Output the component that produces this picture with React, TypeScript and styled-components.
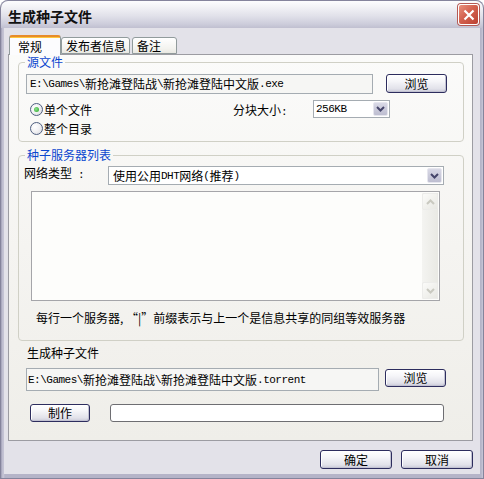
import styled, { createGlobalStyle } from "styled-components";

const GlobalStyle = createGlobalStyle`
  * { box-sizing: border-box; }
  body {
    margin: 0;
    background: #ffffff;
    font-family: "Noto Sans CJK SC", "Liberation Sans", sans-serif;
    font-size: 12px;
    color: #000;
  }
`;

const Chevron = ({ color }: { color: string }) => (
  <svg width="9" height="6" viewBox="0 0 9 6">
    <path d="M1 1 L4.5 4.5 L8 1" fill="none" stroke={color} strokeWidth="2" />
  </svg>
);

const ChevronUp = ({ color }: { color: string }) => (
  <svg width="9" height="6" viewBox="0 0 9 6">
    <path d="M1 5 L4.5 1.5 L8 5" fill="none" stroke={color} strokeWidth="2" />
  </svg>
);

const App = () => {
  return (
    <>
      <GlobalStyle />
      <Window>
        <TitleBar>
          <Title>生成种子文件</Title>
          <CloseButton>
            <svg width="12" height="12" viewBox="0 0 12 12">
              <path d="M1.5 1.5 L10.5 10.5 M10.5 1.5 L1.5 10.5" stroke="#fff" strokeWidth="2.2" />
            </svg>
          </CloseButton>
        </TitleBar>
        <Body>
          <Tabs>
            <Tab $active $w={52}>常规</Tab>
            <Tab $w={69}>发布者信息</Tab>
            <Tab $w={45} $gap={2}>备注</Tab>
          </Tabs>
          <Panel>
            <Group>
              <Legend>源文件</Legend>
              <GroupBody $pad="5px 0 3px 0">
                <FieldRow $indent={7}>
                  <TextBox $w={347} $h={20} $pad={3}>
                    <Latin>E:\Games\</Latin>新抢滩登陆战<Latin>\</Latin>新抢滩登陆中文版<Latin>.exe</Latin>
                  </TextBox>
                  <Button $w={61} $h={19} $ml={13}>浏览</Button>
                </FieldRow>
                <OptionsRow>
                  <RadioList>
                    <RadioItem>
                      <RadioDot $checked />
                      单个文件
                    </RadioItem>
                    <RadioItem>
                      <RadioDot />
                      整个目录
                    </RadioItem>
                  </RadioList>
                  <FieldLabel $w={80} $lh={19}>
                    分块大小<Latin>:</Latin>
                  </FieldLabel>
                  <Select $w={77} $h={18} $pad={2}>
                    <SelectValue>
                      <Latin>256KB</Latin>
                    </SelectValue>
                    <SelectArrow>
                      <Chevron color="#45456a" />
                    </SelectArrow>
                  </Select>
                </OptionsRow>
              </GroupBody>
            </Group>

            <Group $mt={6}>
              <Legend>种子服务器列表</Legend>
              <GroupBody $pad="4px 0 15px 0">
                <FieldRow $indent={5}>
                  <FieldLabel $w={84} $lh={14}>
                    网络类型<Latin> :</Latin>
                  </FieldLabel>
                  <Select $w={336} $h={19} $pad={4}>
                    <SelectValue>
                      使用公用<Latin>DHT</Latin>网络<Latin>(</Latin>推荐<Latin>)</Latin>
                    </SelectValue>
                    <SelectArrow>
                      <Chevron color="#45456a" />
                    </SelectArrow>
                  </Select>
                </FieldRow>
                <ListBox>
                  <ListArea />
                  <ScrollBar>
                    <ScrollButton>
                      <ChevronUp color="#c9c9c0" />
                    </ScrollButton>
                    <ScrollTrack />
                    <ScrollButton>
                      <Chevron color="#c9c9c0" />
                    </ScrollButton>
                  </ScrollBar>
                </ListBox>
                <Note>每行一个服务器, “|”前缀表示与上一个是信息共享的同组等效服务器</Note>
              </GroupBody>
            </Group>

            <OutputLabel>生成种子文件</OutputLabel>
            <FieldRow $indent={8} $mt={8}>
              <TextBox $w={353} $h={23} $pad={1}>
                <Latin>E:\Games\</Latin>新抢滩登陆战<Latin>\</Latin>新抢滩登陆中文版<Latin>.torrent</Latin>
              </TextBox>
              <Button $w={61} $h={18} $ml={6} $mt={1}>浏览</Button>
            </FieldRow>
            <FieldRow $indent={12} $mt={13}>
              <Button $w={60} $h={18}>制作</Button>
              <Progress />
            </FieldRow>
          </Panel>
          <Footer>
            <Button $w={72} $h={19}>确定</Button>
            <Button $w={72} $h={19}>取消</Button>
          </Footer>
        </Body>
      </Window>
    </>
  );
};

export default App;

const Window = styled.div`
  width: 484px;
  height: 479px;
  display: flex;
  flex-direction: column;
  background: linear-gradient(90deg, #9f9eb5 0, #c9c8d8 2px, #b5b4c8 4px, #b5b4c8 480px, #c9c8d8 482px, #8f8ea6 484px);
  border-radius: 8px 8px 0 0;
  border: 1px solid #85849c;
  border-top: none;
  overflow: hidden;
`;

const TitleBar = styled.div`
  height: 28px;
  flex: none;
  margin: 0 -1px;
  display: flex;
  align-items: center;
  justify-content: space-between;
  padding: 2px 4px 0 7px;
  border: 1px solid #85849c;
  border-bottom: none;
  border-radius: 8px 8px 0 0;
  background: linear-gradient(#fdfdfe 0%, #f1f1f5 25%, #e1e1ea 55%, #cdcddb 85%, #c0bfd0 100%);
`;

const Title = styled.div`
  font-size: 14px;
  font-weight: 700;
  line-height: 16px;
  color: #111;
`;

const CloseButton = styled.div`
  width: 21px;
  height: 21px;
  margin-top: -2px;
  border: 1px solid #ffffff;
  border-radius: 3px;
  background: linear-gradient(135deg, #e9927f 0%, #d3614f 45%, #bb4132 100%);
  box-shadow: 0 0 0 1px #b45a55;
  display: flex;
  align-items: center;
  justify-content: center;
`;

const Body = styled.div`
  flex: 1;
  margin: 0 3px 4px;
  padding: 7px 7px 0 4px;
  background: #e3e2e9;
  display: flex;
  flex-direction: column;
`;

const Tabs = styled.div`
  height: 19px;
  margin-left: 1px;
  display: flex;
  align-items: flex-end;
`;

const Tab = styled.div<{ $active?: boolean; $w: number; $gap?: number }>`
  position: relative;
  z-index: ${(p) => (p.$active ? 2 : 1)};
  width: ${(p) => p.$w}px;
  height: ${(p) => (p.$active ? 20 : 17)}px;
  margin-bottom: ${(p) => (p.$active ? -1 : 0)}px;
  margin-left: ${(p) => p.$gap ?? 0}px;
  padding-left: ${(p) => (p.$active ? 8 : 4)}px;
  padding-top: ${(p) => (p.$active ? 1 : 0)}px;
  display: flex;
  align-items: center;
  line-height: 14px;
  border: 1px solid #919b9c;
  border-bottom: ${(p) => (p.$active ? "none" : "1px solid #919b9c")};
  border-top: ${(p) => (p.$active ? "2px solid #e68b2c" : "1px solid #919b9c")};
  border-radius: 3px 3px 0 0;
  background: ${(p) =>
    p.$active
      ? "linear-gradient(#ffc83c 0, #ffc83c 1px, #fcfcfe 1px)"
      : "linear-gradient(#ffffff, #f3f3ef 70%, #e9e8e2)"};
`;

const Panel = styled.div`
  width: 465px;
  height: 387px;
  flex: none;
  padding-left: 9px;
  border: 1px solid #9c9ca2;
  background: linear-gradient(#fbfbfa, #f5f4f1 50%, #efeee9);
  display: flex;
  flex-direction: column;
`;

const Group = styled.fieldset<{ $mt?: number }>`
  width: 446px;
  margin: ${(p) => p.$mt ?? 0}px 0 0 0;
  padding: 0;
  min-width: 0;
  border: 1px solid #d0d0c6;
  border-radius: 4px;
`;

const Legend = styled.legend`
  margin-left: 6px;
  padding: 0 2px;
  line-height: 14px;
  color: #0b46cf;
`;

const GroupBody = styled.div<{ $pad: string }>`
  padding: ${(p) => p.$pad};
  display: flex;
  flex-direction: column;
`;

const FieldRow = styled.div<{ $indent: number; $mt?: number }>`
  display: flex;
  align-items: flex-start;
  margin-left: ${(p) => p.$indent}px;
  margin-top: ${(p) => p.$mt ?? 0}px;
`;

const Latin = styled.span`
  font-family: "Liberation Mono", "DejaVu Sans Mono", monospace;
  font-size: 11px;
  letter-spacing: -0.5px;
`;

const TextBox = styled.div<{ $w: number; $h: number; $pad: number }>`
  width: ${(p) => p.$w}px;
  height: ${(p) => p.$h}px;
  padding-left: ${(p) => p.$pad}px;
  border: 1px solid #a5acb2;
  background: #f6f6f4;
  display: flex;
  align-items: center;
  white-space: nowrap;
  line-height: 14px;
`;

const Button = styled.button<{ $w: number; $h: number; $ml?: number; $mt?: number }>`
  width: ${(p) => p.$w}px;
  height: ${(p) => p.$h}px;
  margin: ${(p) => p.$mt ?? 0}px 0 0 ${(p) => p.$ml ?? 0}px;
  padding: 0;
  border: 1px solid #2d2d5e;
  border-radius: 3px;
  background: linear-gradient(#ffffff 0%, #f6f6f9 35%, #e2e2ea 80%, #cbcbd9 100%);
  box-shadow: inset 1px 1px 0 #ffffff, inset -1px -1px 0 #c2c2d2;
  font-family: inherit;
  font-size: 12px;
  line-height: 14px;
  color: #000;
  display: flex;
  align-items: center;
  justify-content: center;
`;

const OptionsRow = styled.div`
  display: flex;
  align-items: flex-start;
  margin-top: 6px;
  padding-left: 11px;
`;

const RadioList = styled.div`
  width: 203px;
  display: flex;
  flex-direction: column;
`;

const RadioItem = styled.div`
  height: 19px;
  display: flex;
  align-items: center;
  gap: 1px;
  line-height: 14px;
`;

const RadioDot = styled.span<{ $checked?: boolean }>`
  width: 13px;
  height: 13px;
  border-radius: 50%;
  border: 1px solid #4f5f80;
  background: radial-gradient(circle at 35% 35%, #ffffff 0%, #f2f2f4 45%, #d4d4dc 100%);
  display: flex;
  align-items: center;
  justify-content: center;

  &::after {
    content: "";
    display: ${(p) => (p.$checked ? "block" : "none")};
    width: 5px;
    height: 5px;
    border-radius: 50%;
    background: radial-gradient(circle at 40% 40%, #8fe28f, #22a322);
  }
`;

const FieldLabel = styled.div<{ $w: number; $lh: number }>`
  width: ${(p) => p.$w}px;
  line-height: ${(p) => p.$lh}px;
  white-space: nowrap;
`;

const Select = styled.div<{ $w: number; $h: number; $pad: number }>`
  width: ${(p) => p.$w}px;
  height: ${(p) => p.$h}px;
  padding: 1px 1px 1px ${(p) => p.$pad}px;
  border: 1px solid #a5acb2;
  background: #ffffff;
  display: flex;
  align-items: stretch;
`;

const SelectValue = styled.div`
  flex: 1;
  display: flex;
  align-items: center;
  line-height: 14px;
  white-space: nowrap;
`;

const SelectArrow = styled.div`
  width: 15px;
  border: 1px solid #e6e6ee;
  border-radius: 2px;
  background: linear-gradient(#d9d9e6, #bdbdd0);
  display: flex;
  align-items: center;
  justify-content: center;
`;

const ListBox = styled.div`
  width: 409px;
  height: 110px;
  margin: 6px 0 0 12px;
  padding: 1px;
  border: 1px solid #a5a5a9;
  background: #fdfdfb;
  display: flex;
`;

const ListArea = styled.div`
  flex: 1;
`;

const ScrollBar = styled.div`
  width: 16px;
  display: flex;
  flex-direction: column;
  background: linear-gradient(90deg, #f4f4f1, #e9e9e4);
`;

const ScrollButton = styled.div`
  height: 17px;
  border: 1px solid #ececea;
  border-radius: 2px;
  background: linear-gradient(135deg, #fbfbf9, #e8e8e3);
  display: flex;
  align-items: center;
  justify-content: center;
`;

const ScrollTrack = styled.div`
  flex: 1;
`;

const Note = styled.div`
  margin: 10px 0 0 17px;
  line-height: 14px;
  white-space: nowrap;
`;

const OutputLabel = styled.div`
  margin: 5px 0 0 9px;
  line-height: 14px;
`;

const Progress = styled.div`
  width: 334px;
  height: 18px;
  margin-left: 20px;
  border: 1px solid #6e6e72;
  border-radius: 3px;
  background: #ffffff;
`;

const Footer = styled.div`
  margin-top: 9px;
  display: flex;
  justify-content: flex-end;
  gap: 9px;
`;
